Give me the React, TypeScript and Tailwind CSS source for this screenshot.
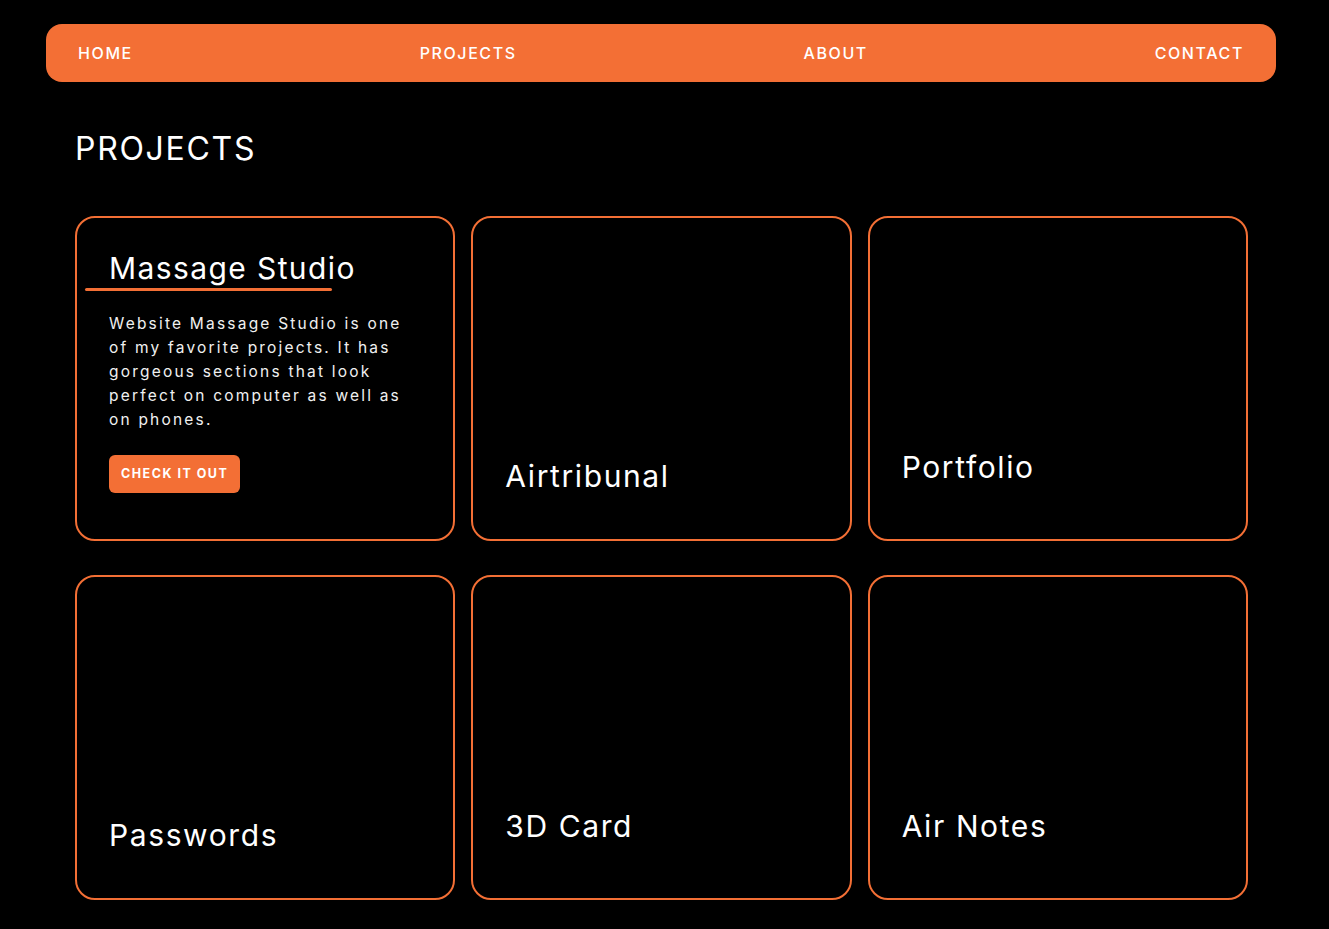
const navLinks = ["Home", "Projects", "About", "Contact"];

type Project = {
  title: string;
  offset: string;
};

const otherProjects: Project[] = [
  { title: "Airtribunal", offset: "pb-[43px]" },
  { title: "Portfolio", offset: "pb-[52px]" },
  { title: "Passwords", offset: "pb-[43px]" },
  { title: "3D Card", offset: "pb-[52px]" },
  { title: "Air Notes", offset: "pb-[52px]" },
];

function Navbar() {
  return (
    <nav className="mx-[46px] flex h-[58px] w-[1230px] items-center justify-between rounded-[16px] bg-[#f36f35] px-[32px]">
      {navLinks.map((link) => (
        <a
          key={link}
          href="#"
          className="text-[16px] font-medium uppercase tracking-[1.6px] text-white"
        >
          {link}
        </a>
      ))}
    </nav>
  );
}

function FeaturedCard() {
  return (
    <div className="h-[325px] rounded-[20px] border-2 border-[#f36f35] px-[32px] pt-[30px]">
      <div className="relative inline-block">
        <h3 className="text-[30px] leading-[40px] tracking-[1.4px] text-white">
          Massage Studio
        </h3>
        <span className="absolute left-[-24px] top-[40px] h-[3px] w-[247px] rounded-full bg-[#f36f35]" />
      </div>
      <p className="mt-[24px] w-[310px] text-[15.5px] leading-[24px] tracking-[2.2px] text-[#f0f0f0]">
        Website Massage Studio is one of my favorite projects. It has gorgeous
        sections that look perfect on computer as well as on phones.
      </p>
      <button className="mt-[23px] h-[38px] rounded-[6px] bg-[#f36f35] px-[12px] text-[12.5px] font-bold uppercase tracking-[1.5px] text-white">
        Check it out
      </button>
    </div>
  );
}

function ProjectCard({ project }: { project: Project }) {
  return (
    <div
      className={`flex h-[325px] flex-col justify-end rounded-[20px] border-2 border-[#f36f35] px-[32px] ${project.offset}`}
    >
      <h3 className="text-[30px] leading-[40px] tracking-[1.6px] text-white">
        {project.title}
      </h3>
    </div>
  );
}

export default function App() {
  return (
    <div className="min-h-screen bg-black pb-[29px] pt-[24px] font-['Inter',sans-serif]">
      <Navbar />
      <main className="ml-[75px] w-[1173px]">
        <h1 className="mt-[51px] text-[32px] leading-[32px] tracking-[1.7px] text-white">
          PROJECTS
        </h1>
        <div className="mt-[51px] grid grid-cols-3 gap-x-[16px] gap-y-[34px]">
          <FeaturedCard />
          {otherProjects.map((project) => (
            <ProjectCard key={project.title} project={project} />
          ))}
        </div>
      </main>
    </div>
  );
}
